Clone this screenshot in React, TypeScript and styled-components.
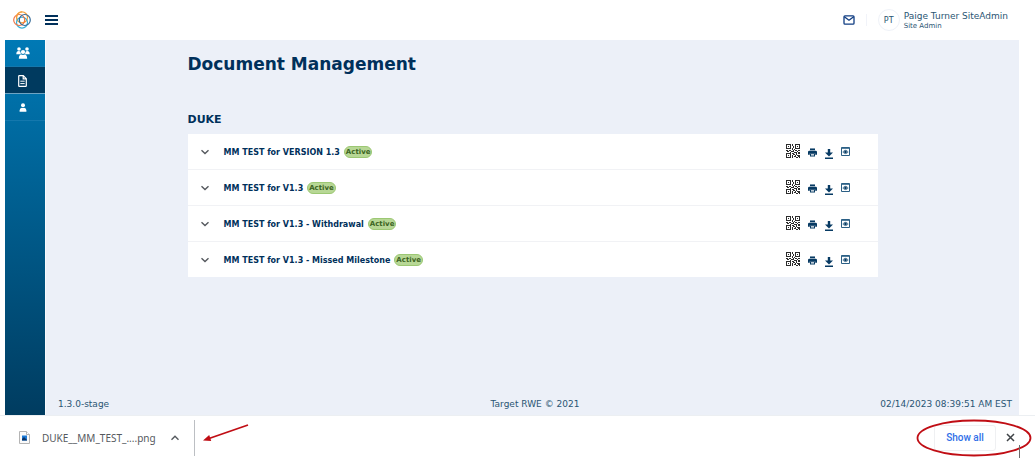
import React from "react";
import styled, { createGlobalStyle, css } from "styled-components";

const navy = "#00305b";
const ink = "#2a5573";
const uiFont = `"DejaVu Sans", Verdana, sans-serif`;
const shellFont = `"Noto Sans", "Open Sans", sans-serif`;

const GlobalStyle = createGlobalStyle`
  *, *::before, *::after { box-sizing: border-box; }
  body { margin: 0; background: #fff; font-family: ${uiFont}; color: ${ink}; }
  button { font: inherit; color: inherit; background: none; border: 0; padding: 0; cursor: pointer; }
  a { color: inherit; text-decoration: none; }
  svg { display: block; }
  h1, h2, p, ul { margin: 0; padding: 0; }
  ul { list-style: none; }
`;

const Page = styled.div`
  min-height: 100vh;
  display: flex;
  flex-direction: column;
`;

const AppFrame = styled.div`
  flex: 1;
  display: flex;
  flex-direction: column;
  padding: 0 16px 0 5px;
`;

const TopBar = styled.header`
  height: 40px;
  display: flex;
  align-items: center;
  padding: 0 11px 0 8px;
`;

const MenuButton = styled.button`
  margin-left: 14px;
`;

const Account = styled.div`
  margin-left: auto;
  display: flex;
  align-items: center;
`;

const Divider = styled.span`
  width: 1px;
  height: 12px;
  margin: 0 11px;
  background: #f1f3f9;
`;

const Avatar = styled.span`
  width: 22px;
  height: 22px;
  border: 1px solid #eff2f8;
  border-radius: 50%;
  display: grid;
  place-items: center;
  font-size: 8px;
  margin-right: 4px;
`;

const UserName = styled.p`
  font-size: 9px;
  line-height: 11px;
`;

const UserRole = styled.p`
  font-size: 7px;
  line-height: 8px;
`;

const Body = styled.div`
  flex: 1;
  display: flex;
`;

const SideNav = styled.nav`
  width: 40px;
  background: linear-gradient(#0079b5, #003c60);
`;

const NavLink = styled.a<{ $active?: boolean }>`
  height: 27px;
  display: flex;
  align-items: center;
  justify-content: center;
  padding-right: 5px;
  border-bottom: 1px solid #1478ad;
  ${(p) => p.$active && css`
    padding-top: 2px;
    background: #003a5f;
    border-color: #6ea4c3;
  `}
`;

const Main = styled.main`
  flex: 1;
  display: flex;
  flex-direction: column;
  background: #ecf0f8;
  border-left: 1px solid #f8fafd;
`;

const Content = styled.div`
  flex: 1;
  width: 100%;
  max-width: 690px;
  margin: 0 auto;
`;

const Title = styled.h1`
  margin-top: 12px;
  font-size: 17px;
  line-height: 24px;
  color: ${navy};
`;

const GroupTitle = styled.h2`
  margin: 37px 0 7px;
  font-size: 11px;
  line-height: 14px;
  color: ${navy};
`;

const DocumentList = styled.ul`
  background: #fff;
`;

const DocumentRow = styled.li`
  display: flex;
  align-items: center;
  height: 36px;
  padding: 0 28px 0 12px;
  border-bottom: 1px solid #f1f2f5;
  &:last-child { height: 35px; border-bottom: 0; }
`;

const DocumentName = styled.span`
  margin: 0 4px 0 14px;
  padding-top: 1px;
  font-size: 8px;
  font-weight: bold;
  color: ${navy};
`;

const StatusPill = styled.span`
  height: 12px;
  padding: 0 1px;
  border: 1px solid #9cc873;
  border-radius: 6px;
  background: #b7d795;
  color: #3c6423;
  font-size: 7px;
  line-height: 10px;
  font-weight: bold;
`;

const RowActions = styled.div`
  margin-left: auto;
  display: flex;
  align-items: center;
  gap: 8px;
`;

const Footer = styled.footer`
  display: grid;
  grid-template-columns: 1fr auto 1fr;
  padding: 0 7px 5px 12px;
  font-size: 9px;
  line-height: 12px;
  & > :last-child { text-align: right; }
`;

const DownloadBar = styled.section`
  position: relative;
  height: 48px;
  display: flex;
  align-items: center;
  padding: 0 20px 4px 19px;
  border-top: 1px solid #eceff2;
  font-family: ${shellFont};
  font-size: 10px;
  color: #55595e;
`;

const FileName = styled.a`
  margin: 0 14px 0 12px;
`;

const BarSeparator = styled.span`
  width: 1px;
  height: 36px;
  margin-left: 14px;
  background: #bcbfc3;
`;

const ShowAll = styled.button`
  margin-left: auto;
  width: 62px;
  height: 26px;
  border: 1px solid #eff0f2;
  border-radius: 3px;
  color: #2f6fe8;
  font-family: Roboto, sans-serif;
  font-weight: 500;
`;

const CloseButton = styled.button`
  margin-left: 10px;
`;

const ArrowMark = styled.svg`
  position: absolute;
  left: 202px;
  top: 8px;
`;

const CircleMark = styled.svg`
  position: absolute;
  right: 3px;
  top: 2px;
`;

const Logo = () => (
  <svg width="18" height="18" viewBox="0 0 18 18" fill="none" strokeWidth="1.2" role="img" aria-label="Target RWE">
    <circle cx="9" cy="6.400" r="5.500" stroke="#f5a03c" />
    <circle cx="9" cy="11.600" r="5.500" stroke="#38b0d8" />
    <circle cx="6.200" cy="9" r="5.500" stroke="#ef7443" />
    <circle cx="11.800" cy="9" r="5.500" stroke="#366b98" />
    <path d="M4 8.500A5.500 5.500 0 0 1 9 .9" stroke="#f5a03c" />
  </svg>
);

const MenuIcon = () => (
  <svg width="13" height="10" viewBox="0 0 13 10" fill={navy}>
    <path d="M0 0h13v2H0zM0 4h13v2H0zM0 8h13v2H0z" />
  </svg>
);

const MailIcon = () => (
  <svg width="12" height="10" viewBox="0 0 12 10" fill="none" stroke="#0f3c82" strokeWidth="1.3">
    <rect x="1" y=".8" width="10" height="8.4" rx="1" />
    <path d="M1.3 1.8 6 5.2l4.7-3.4" />
  </svg>
);

const PeopleIcon = () => (
  <svg width="14" height="12" viewBox="0 0 14 12" fill="#fff">
    <circle cx="3" cy="2" r="1.8" />
    <circle cx="11" cy="2" r="1.8" />
    <circle cx="7" cy="5" r="2.1" />
    <path d="M.3 7.200c0-2.200.9-3.100 2.400-3.100.9 0 1.500.3 1.900.9-.1 1 .1 1.500.5 2.200H.3zM13.700 7.200c0-2.200-.9-3.100-2.400-3.100-.9 0-1.500.3-1.900.9.1 1-.1 1.500-.5 2.200h4.800zM2.800 11.800c0-2.900 1.200-4.100 2.700-4.200 1 .5 2 .5 3 0 1.500.1 2.700 1.300 2.700 4.200z" />
  </svg>
);

const FileIcon = () => (
  <svg width="9" height="12" viewBox="0 0 9 12" fill="none" stroke="#fff" strokeWidth="1.2">
    <path d="M.7 1.300q0-.6.6-.6h4L8.300 3.700v7q0 .6-.6.6H1.300q-.6 0-.6-.6zM5.200.8v3h3" />
    <path d="M2.300 6.200h4.400M2.300 8.600h4.400" strokeWidth="1" />
  </svg>
);

const PersonIcon = () => (
  <svg width="8" height="9" viewBox="0 0 8 9" fill="#fff">
    <circle cx="4" cy="2.200" r="2" />
    <path d="M.6 8.700V7.300Q.8 5 3 4.800q1 .5 2 0Q7.200 5 7.400 7.300v1.400z" />
  </svg>
);

const Chevron = ({ up }: { up?: boolean }) => (
  <svg width="10" height="6" viewBox="0 0 10 6" fill="none" stroke="#55595e" strokeWidth="1.4">
    <path d={up ? "M1.500 4.800 5 1.300l3.500 3.500" : "M1.500 1.200 5 4.500l3.500-3.300"} />
  </svg>
);

const QrIcon = () => (
  <svg width="14" height="14" viewBox="0 0 14 14" fill="#2c2c2c">
    <path d="M0 0h5v5H0zM1 1v3h3V1zM9 0h5v5H9zM10 1v3h3V1zM0 9h5v5H0zM1 10v3h3v-3z" fillRule="evenodd" />
    <path d="M2 2h1v1H2zM11 2h1v1h-1zM2 11h1v1H2zM6 0h1v2H6zM7 2h1v2H7zM6 4h1v2H6zM8 5h1v1H8zM0 6h2v1H0zM3 6h2v1H3zM1 7h2v1H1zM5 7h2v1H5zM7 6h1v2H7zM9 6h2v1H9zM12 6h2v1h-2zM11 7h1v1h-1zM4 8h1v1H4zM6 9h2v1H6zM8 8h2v1H8zM10 8h1v3h-1zM12 8h2v2h-2zM6 11h1v3H6zM7 10h2v1H7zM8 12h2v1H8zM9 11h1v1H9zM11 11h2v1h-2zM12 12h1v1h-1zM10 13h2v1h-2zM13 11h1v3h-1z" />
  </svg>
);

const PrintIcon = () => (
  <svg width="9" height="9" viewBox="0 0 10 10" fill="#073a63">
    <path d="M2.200.500h5.600v2H2.200z" />
    <path d="M1.500 3h7Q10 3 10 4.500v3H8V5.700H2v1.800H0v-3Q0 3 1.500 3z" />
    <path d="M2.200 5.900h5.600v3.600H2.200zM3.300 6.900v1.500h3.400V6.900z" fillRule="evenodd" />
  </svg>
);

const DownloadIcon = () => (
  <svg width="8" height="10" viewBox="0 0 8 10" fill="#073a63">
    <path d="M2.800 0h2.400v3.400H8L4 7.400 0 3.400h2.800zM0 8.600h8V10H0z" />
  </svg>
);

const PreviewIcon = () => (
  <svg width="9" height="9" viewBox="0 0 9 9" fill="none" stroke="#2b5f85">
    <path d="M.5.5h8v8h-8zM0 1.300h9" />
    <path d="M1.800 5Q4.500 1.600 7.200 5 4.500 8.200 1.800 5z" strokeWidth=".8" />
    <circle cx="4.500" cy="4.900" r="1.300" fill="#073a63" stroke="none" />
  </svg>
);

const ImageFileIcon = () => (
  <svg width="11" height="13" viewBox="0 0 11 13">
    <path d="M.5.500h7l3 3v9H.500z" fill="#fafafa" stroke="#b4b4b4" />
    <path d="M7.500.500v3h3" fill="#fff" stroke="#b4b4b4" />
    <path d="M3 4.500h5v5H3z" fill="#1c7bd8" />
    <path d="m3 9.500 0-1.500 2-2 3 3v.5z" fill="#0b3467" />
  </svg>
);

const CloseIcon = () => (
  <svg width="9" height="9" viewBox="0 0 9 9" stroke="#3f4347" strokeWidth="1.500">
    <path d="m1 1 7 7M8 1 1 8" />
  </svg>
);

const documents = [
  "MM TEST for VERSION 1.3",
  "MM TEST for V1.3",
  "MM TEST for V1.3 - Withdrawal",
  "MM TEST for V1.3 - Missed Milestone",
];

const LowerAction = styled.button`
  margin-top: 2px;
`;

const DownloadAction = styled(LowerAction)`
  margin-top: 4px;
`;

const QrAction = styled.button`
  margin-top: -1px;
`;

export default function App() {
  return (
    <Page>
      <GlobalStyle />
      <AppFrame>
        <TopBar>
          <Logo />
          <MenuButton aria-label="Toggle menu"><MenuIcon /></MenuButton>
          <Account>
            <button aria-label="Messages"><MailIcon /></button>
            <Divider />
            <Avatar>PT</Avatar>
            <div>
              <UserName>Paige Turner SiteAdmin</UserName>
              <UserRole>Site Admin</UserRole>
            </div>
          </Account>
        </TopBar>
        <Body>
          <SideNav>
            <NavLink href="#users" aria-label="Users"><PeopleIcon /></NavLink>
            <NavLink href="#documents" aria-label="Documents" $active><FileIcon /></NavLink>
            <NavLink href="#profile" aria-label="Profile"><PersonIcon /></NavLink>
          </SideNav>
          <Main>
            <Content>
              <Title>Document Management</Title>
              <GroupTitle>DUKE</GroupTitle>
              <DocumentList>
                {documents.map((name) => (
                  <DocumentRow key={name}>
                    <button aria-label={`Expand ${name}`}><Chevron /></button>
                    <DocumentName>{name}</DocumentName>
                    <StatusPill>Active</StatusPill>
                    <RowActions>
                      <QrAction aria-label="QR code"><QrIcon /></QrAction>
                      <LowerAction aria-label="Print"><PrintIcon /></LowerAction>
                      <DownloadAction aria-label="Download"><DownloadIcon /></DownloadAction>
                      <button aria-label="Preview"><PreviewIcon /></button>
                    </RowActions>
                  </DocumentRow>
                ))}
              </DocumentList>
            </Content>
            <Footer>
              <span>1.3.0-stage</span>
              <span>Target RWE © 2021</span>
              <span>02/14/2023 08:39:51 AM EST</span>
            </Footer>
          </Main>
        </Body>
      </AppFrame>
      <DownloadBar aria-label="Downloads">
        <ImageFileIcon />
        <FileName href="#file">DUKE__MM_TEST_....png</FileName>
        <button aria-label="File options"><Chevron up /></button>
        <BarSeparator />
        <ShowAll>Show all</ShowAll>
        <CloseButton aria-label="Close downloads"><CloseIcon /></CloseButton>
        <ArrowMark width="48" height="20" viewBox="0 0 48 20">
          <path d="M46 1 7 14.500" stroke="#c00d14" strokeWidth="1.800" />
          <path d="m1 16.500 6.200-5.600 2 6.200z" fill="#c00d14" />
        </ArrowMark>
        <CircleMark width="116" height="42" viewBox="0 0 116 42" fill="none">
          <ellipse cx="58" cy="20" rx="56.500" ry="17.500" stroke="#c00d14" strokeWidth="1.800" />
          <path d="M103.500 27v13" stroke="#6b6b6b" />
        </CircleMark>
      </DownloadBar>
    </Page>
  );
}
